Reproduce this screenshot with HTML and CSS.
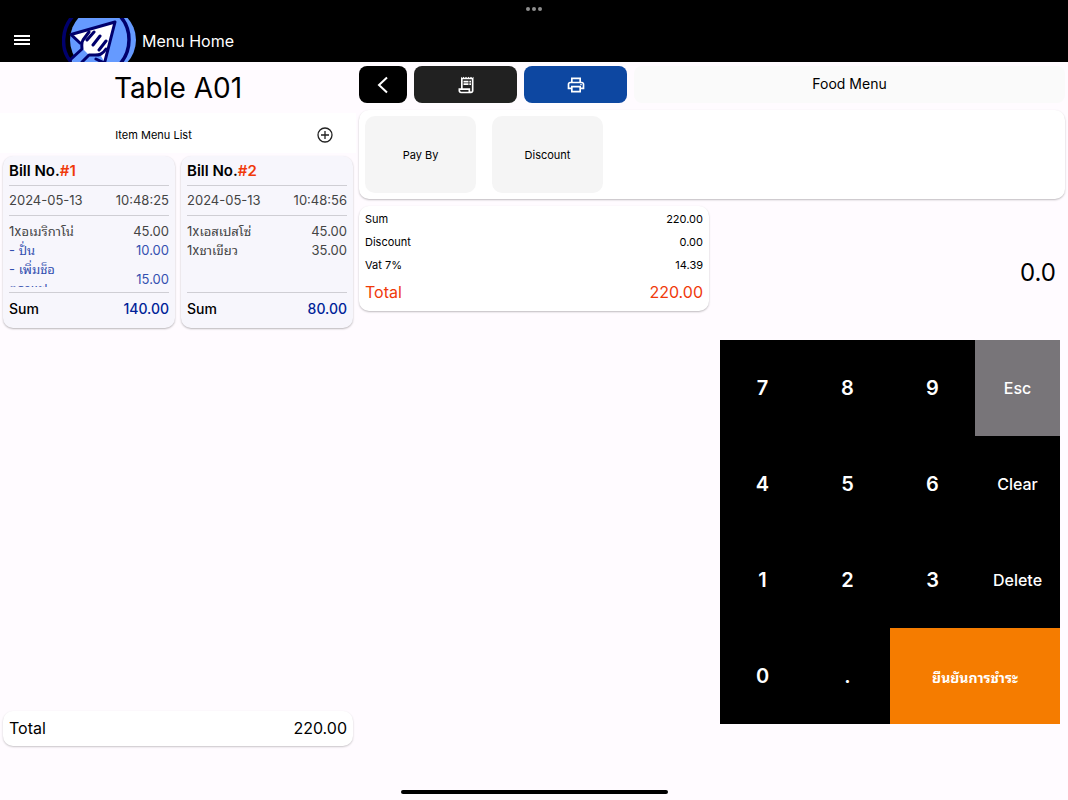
FILE: index.html
```html
<!DOCTYPE html>
<html lang="th">
<head>
<meta charset="utf-8">
<meta name="viewport" content="width=device-width, initial-scale=1">
<title>Menu Home</title>
<link rel="stylesheet" href="styles.css">
</head>
<body>
<header class="appbar">
  <svg class="dots" viewBox="0 0 18 6" aria-hidden="true"><circle cx="3" cy="3" r="2"/><circle cx="9" cy="3" r="2"/><circle cx="15" cy="3" r="2"/></svg>
  <div class="bar">
    <button class="menu-btn" aria-label="Menu"><svg width="16" height="12" viewBox="0 0 16 12"><path d="M0 2h16M0 6h16M0 10h16" stroke="#fff" stroke-width="2"/></svg></button>
    <svg class="logo" width="74" height="44" viewBox="0 0 74 44" aria-hidden="true">
      <circle cx="41" cy="22" r="33" fill="#659aff"/>
      <path d="M9 16.500L53 4 42.500 45 17 24z" fill="#fff"/>
      <path d="M27 14l-7 9v9L8 42l8 6 5-6 6-5h8l9-8z" fill="#fff"/>
      <path d="M20 30L8 42l8 6 5-6 6-5z" fill="#659aff"/>
      <path d="M32 38h7l4 7z" fill="#659aff"/>
      <g fill="none" stroke="#00006c" stroke-width="3" stroke-linecap="round" stroke-linejoin="round">
        <path d="M11-2C-1 11-1 32 8 42.500M58-2c12 13 12 34 0 48" stroke-width="3.500"/>
        <path d="M18 25L9 16.500 53 4 42.500 45 34 41"/>
        <path d="M27 14l-6 8c-2 3-1 6-1 9L8 42M44 31c-4 6-7 6-11 6h-6l-7 7M32 14l-7 8M38 18l-7 9M44 23l-7 9"/>
      </g>
    </svg>
    <h1 class="bar-title">Menu Home</h1>
  </div>
</header>

<main class="layout">
  <section class="orders">
    <h2 class="table-name">Table A01</h2>
    <div class="list-head">
      <span class="list-title">Item Menu List</span>
      <button class="add-btn" aria-label="Add"><svg width="16" height="16" viewBox="0 0 16 16" fill="none" stroke="#222" stroke-width="1.3"><circle cx="8" cy="8" r="7"/><path d="M8 4v8M4 8h8"/></svg></button>
    </div>
    <div class="bills">
      <article class="bill">
        <h3 class="bill-no">Bill No.<span class="accent">#1</span></h3>
        <div class="bill-time"><span>2024-05-13</span><span>10:48:25</span></div>
        <ul class="items">
          <li><span>1xอเมริกาโน่</span><span>45.00</span></li>
          <li class="extra"><span>- ปั่น</span><span>10.00</span></li>
          <li class="extra"><span>- เพิ่มช็อ<br>ตกาแฟ</span><span>15.00</span></li>
        </ul>
        <div class="bill-sum"><span>Sum</span><span class="navy">140.00</span></div>
      </article>
      <article class="bill">
        <h3 class="bill-no">Bill No.<span class="accent">#2</span></h3>
        <div class="bill-time"><span>2024-05-13</span><span>10:48:56</span></div>
        <ul class="items">
          <li><span>1xเอสเปสโซ่</span><span>45.00</span></li>
          <li><span>1xชาเขียว</span><span>35.00</span></li>
        </ul>
        <div class="bill-sum"><span>Sum</span><span class="navy">80.00</span></div>
      </article>
    </div>
    <div class="grand"><span>Total</span><span>220.00</span></div>
  </section>

  <section class="checkout">
    <div class="toolbar">
      <button class="tool back" aria-label="Back"><svg width="24" height="24" viewBox="0 0 24 24" fill="none" stroke="#fff" stroke-width="2"><path d="M16 4.500L8 12l8 7.500"/></svg></button>
      <button class="tool receipt" aria-label="Receipt"><svg width="20" height="20" viewBox="0 0 24 24" fill="#fff"><path d="M19.500 3.500L18 2l-1.500 1.500L15 2l-1.500 1.500L12 2l-1.500 1.500L9 2 7.500 3.500 6 2v14H3v3c0 1.660 1.340 3 3 3h12c1.660 0 3-1.340 3-3V2l-1.500 1.500zM15 20H6c-.55 0-1-.45-1-1v-1h10v2zm4-1c0 .55-.45 1-1 1s-1-.45-1-1v-3H8V5h11v14z"/><path d="M9 7h6v2H9zM16 7h2v2h-2zM9 10h6v2H9zM16 10h2v2h-2z"/></svg></button>
      <button class="tool print" aria-label="Print"><svg width="20" height="20" viewBox="0 0 24 24" fill="#fff"><path d="M19 8h-1V3H6v5H5c-1.660 0-3 1.340-3 3v6h4v4h12v-4h4v-6c0-1.660-1.340-3-3-3zM8 5h8v3H8V5zm8 12v2H8v-4h8v2zm2-2v-2H6v2H4v-4c0-.55.45-1 1-1h14c.55 0 1 .45 1 1v4h-2z"/><circle cx="18" cy="11.500" r="1"/></svg></button>
      <h2 class="page-name">Food Menu</h2>
    </div>
    <div class="actions">
      <button class="tile">Pay By</button>
      <button class="tile">Discount</button>
    </div>
    <div class="payment">
      <dl class="summary">
        <div class="row"><dt>Sum</dt><dd>220.00</dd></div>
        <div class="row"><dt>Discount</dt><dd>0.00</dd></div>
        <div class="row"><dt>Vat 7%</dt><dd>14.39</dd></div>
        <div class="row total"><dt>Total</dt><dd>220.00</dd></div>
      </dl>
      <div class="entry">
        <output class="amount">0.0</output>
        <div class="keypad">
          <button class="key">7</button><button class="key">8</button><button class="key">9</button><button class="key word esc">Esc</button>
          <button class="key">4</button><button class="key">5</button><button class="key">6</button><button class="key word">Clear</button>
          <button class="key">1</button><button class="key">2</button><button class="key">3</button><button class="key word">Delete</button>
          <button class="key">0</button><button class="key">.</button><button class="key confirm">ยืนยันการชำระ</button>
        </div>
      </div>
    </div>
  </section>
</main>
<footer class="home-area"><div class="home-bar"></div></footer>
</body>
</html>
```
FILE: styles.css
```css
* { box-sizing: border-box; }
body {
  margin: 0;
  min-height: 100vh;
  display: flex;
  flex-direction: column;
  background: #fffbff;
  color: #000;
  font-family: Inter, "Noto Sans Thai Looped", Loma, Garuda, Waree, "Noto Sans", sans-serif;
  font-size: 13px;
}
h1, h2, h3, ul, dl, dd { margin: 0; padding: 0; font-weight: 400; }
button { border: 0; padding: 0; background: none; font: inherit; color: inherit; cursor: pointer; display: flex; align-items: center; justify-content: center; }
svg { display: block; }

.appbar { background: #000; color: #fff; display: flex; flex-direction: column; align-items: center; padding-top: 6px; }
.dots { width: 18px; height: 6px; fill: #8e8e8e; }
.bar { align-self: stretch; display: flex; align-items: center; margin-top: 6px; height: 44px; }
.menu-btn { width: 44px; height: 44px; }
.logo { margin-left: 18px; }
.bar-title { font-size: 16px; margin-left: 6px; line-height: 24px; padding-top: 2px; }

.layout { flex: 1; display: grid; grid-template-columns: 1fr 2fr; }
.orders { display: flex; flex-direction: column; }
.table-name { font-size: 28px; line-height: 50px; padding-top: 1px; text-align: center; }
.list-head { background: #fff; height: 40px; display: flex; align-items: center; padding: 4px 13px 0 0; }
.list-title { flex: 1; text-align: center; font-size: 11px; }
.add-btn { width: 36px; height: 24px; }
.bills { display: grid; grid-template-columns: 1fr 1fr; gap: 6px; padding: 3px; }
.bill { background: #f7f6fc; border-radius: 10px; padding: 0 6px 4px; box-shadow: 0 1px 2px rgba(0,0,0,.28); }
.bill-no { font-weight: 600; font-size: 15px; line-height: 29px; border-bottom: 1px solid #cfced4; }
.accent { color: #f03a0a; }
.bill-time { display: flex; justify-content: space-between; line-height: 29px; border-bottom: 1px solid #cfced4; color: #444; }
.items { list-style: none; margin: 6px 0 5px; height: 65px; overflow: hidden; color: #444; }
.items li { display: flex; justify-content: space-between; align-items: center; line-height: 19px; }
.items .extra { color: #3450b0; }
.bill-sum { display: flex; justify-content: space-between; border-top: 1px solid #cfced4; font-size: 14px; font-weight: 500; line-height: 31px; }
.navy { color: #001f98; }
.grand { margin: auto 3px 34px; background: #fff; border-radius: 10px; box-shadow: 0 1px 2px rgba(0,0,0,.22); padding: 0 6px; display: flex; justify-content: space-between; font-size: 16px; line-height: 35px; }

.checkout { display: flex; flex-direction: column; gap: 7px; padding: 4px 3px 0; }
.toolbar { display: flex; gap: 7px; height: 37px; }
.tool { border-radius: 8px; width: 103px; }
.back { width: 48px; background: #000; }
.receipt { background: #212121; }
.print { background: #0d47a1; }
.page-name { flex: 1; background: #fafafa; border-radius: 8px; font-size: 14px; line-height: 36px; text-align: center; }
.actions { display: flex; gap: 16px; background: #fff; border-radius: 10px; padding: 6px; box-shadow: 0 1px 2px rgba(0,0,0,.26); }
.tile { width: 111px; height: 77px; border-radius: 10px; background: #f5f5f5; font-size: 11px; }
.payment { display: grid; grid-template-columns: 1fr 1fr; gap: 6px; align-items: start; }
.summary { background: #fff; border-radius: 10px; padding: 2px 6px 3px; box-shadow: 0 1px 2px rgba(0,0,0,.26); font-size: 11px; }
.row { display: flex; justify-content: space-between; line-height: 23px; }
.total { font-size: 16px; line-height: 31px; color: #f03a0a; }
.entry { padding: 0 5px; }
.amount { display: block; text-align: right; font-size: 24px; line-height: 134px; padding-right: 4px; }
.keypad { display: grid; grid-template-columns: repeat(4, 1fr); grid-auto-rows: 96px; background: #000; color: #fff; }
.key { font-size: 20px; font-weight: 600; }
.word { font-size: 16px; font-weight: 500; }
.esc { background: #787579; }
.confirm { grid-column: span 2; background: #f57c00; font-size: 14px; font-weight: 700; }

.home-area { height: 20px; display: flex; justify-content: center; align-items: center; padding-top: 4px; }
.home-bar { width: 25%; height: 4px; border-radius: 2px; background: #000; }
```
